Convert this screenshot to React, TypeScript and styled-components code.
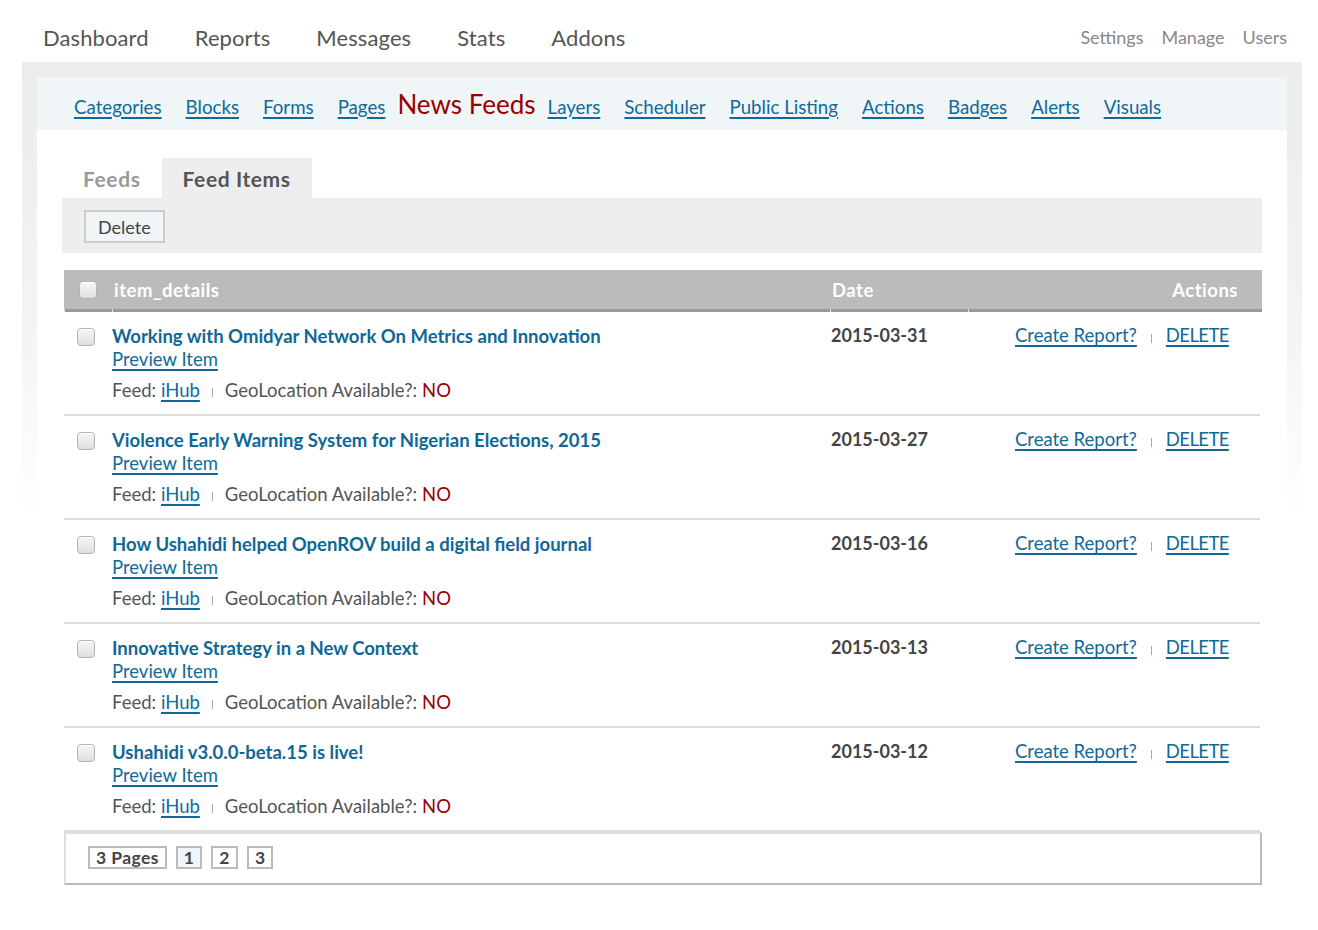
import React from "react";
import styled, { createGlobalStyle } from "styled-components";

const Global = createGlobalStyle`
  html, body { margin: 0; padding: 0; background: #fff; }
  body { font-family: Lato, "Open Sans", sans-serif; color: #555; }
  * { box-sizing: border-box; }
`;

const TopBar = styled.header`
  height: 62px;
  display: flex;
  align-items: center;
  justify-content: space-between;
  padding: 12px 31px 0 43px;
`;

const MainNav = styled.nav`
  display: flex;
`;

const MainLink = styled.a`
  font-size: 22px;
  letter-spacing: 0.1px;
  color: #555;
  text-decoration: none;
  margin-right: 46px;
`;

const UtilNav = styled.nav`
  display: flex;
  gap: 18px;
`;

const UtilLink = styled.a`
  font-size: 18px;
  color: #888;
  text-decoration: none;
`;

const Frame = styled.div`
  margin: 0 16px 0 22px;
  padding: 15px;
  background: linear-gradient(#ececec 0, #f3f3f3 250px, #fff 460px);
`;

const Panel = styled.div`
  background: #fff;
  padding-bottom: 46px;
`;

const SubNav = styled.nav`
  height: 53px;
  background: #f0f5f8;
  display: flex;
  align-items: center;
  padding: 6px 0 0 25px;
`;

const SubLink = styled.a<{ $active?: boolean }>`
  font-size: ${(p) => (p.$active ? "26px" : "18.7px")};
  color: ${(p) => (p.$active ? "#990000" : "#0f6a99")};
  text-decoration: ${(p) => (p.$active ? "none" : "underline")};
  text-underline-offset: 3px;
  text-decoration-thickness: 2px;
  margin: 0 ${(p) => (p.$active ? "0" : "12px")};
  position: relative;
  top: ${(p) => (p.$active ? "-3px" : "0")};
`;

const Content = styled.div`
  padding: 28px 25px 0 25px;
`;

const Tabs = styled.div`
  display: flex;
`;

const Tab = styled.a<{ $active?: boolean }>`
  height: 40px;
  display: flex;
  align-items: center;
  padding: 0 21px;
  font-size: 21px;
  letter-spacing: 0.6px;
  font-weight: bold;
  color: ${(p) => (p.$active ? "#555" : "#999")};
  background: ${(p) => (p.$active ? "#eee" : "transparent")};
  text-decoration: none;
`;

const Toolbar = styled.div`
  background: #eee;
  padding: 12px 22px 10px;
`;

const Button = styled.button`
  font-family: inherit;
  font-size: 18px;
  color: #444;
  background: #f0f5f8;
  border: 2px solid #ccc;
  height: 33px;
  padding: 0 12px;
`;

const Table = styled.div`
  margin: 17px 0 0 2px;
`;

const cols = "48px 718px 138px 1fr";

const HeadRow = styled.div`
  display: grid;
  grid-template-columns: ${cols};
  height: 42px;
`;

const HeadCell = styled.div<{ $align?: string; $pad?: string }>`
  display: flex;
  align-items: center;
  justify-content: ${(p) => p.$align || "flex-start"};
  padding: ${(p) => p.$pad || "0 0 3px 2px"};
  font-size: 18.5px;
  letter-spacing: 0.5px;
  font-weight: bold;
  color: #fff;
  background: linear-gradient(to right, #e6e6e6 0 1px, #999 1px) bottom / 100% 3px no-repeat, #bbb;
`;

const Check = styled.input.attrs({ type: "checkbox" })`
  appearance: none;
  width: 18px;
  height: 18px;
  margin: 0;
  border: 1px solid #b4b4b4;
  border-radius: 4px;
  background: linear-gradient(#f7f7f7, #dedede);
  box-shadow: inset 0 1px 0 #fff;
`;

const Row = styled.div`
  display: grid;
  grid-template-columns: ${cols};
  height: 104px;
  border-bottom: 2px solid #ddd;
  margin-right: 2px;
  &:last-child { border-bottom: none; height: 102px; }
`;

const CheckCell = styled.div`
  padding: 16px 0 0 13px;
`;

const Details = styled.div`
  padding: 13px 0 0 0;
  display: flex;
  flex-direction: column;
`;

const Title = styled.a`
  font-size: 18.5px;
  font-weight: bold;
  color: #0f6796;
  text-decoration: none;
  line-height: 23px;
`;

const Link = styled.a<{ $tight?: boolean }>`
  font-size: 18.5px;
  letter-spacing: ${(p) => (p.$tight ? "-0.6px" : "0")};
  color: #0f6a99;
  text-decoration: underline;
  text-underline-offset: 3px;
  text-decoration-thickness: 2px;
  line-height: 23px;
`;

const Meta = styled.div`
  margin-top: 8px;
  font-size: 18.5px;
  line-height: 23px;
  color: #555;
  display: flex;
  align-items: center;
`;

const Sep = styled.span`
  display: inline-block;
  width: 1px;
  height: 9px;
  background: #aaa;
  margin: 3px 12px 0;
`;

const No = styled.span`
  color: #990000;
  margin-left: 5px;
`;

const DateCell = styled.div`
  padding: 12px 0 0 1px;
  font-size: 18px;
  font-weight: bold;
  color: #444;
  line-height: 23px;
`;

const ActionsCell = styled.div`
  padding: 12px 0 0 47px;
  display: flex;
  align-items: flex-start;
  line-height: 23px;
`;

const ActionSep = styled(Sep)`
  margin: 10px 14px 0;
`;

const Pager = styled.div`
  height: 53px;
  border: 2px solid #bbb;
  border-top-color: #ddd;
  border-left-color: #ddd;
  display: flex;
  align-items: center;
  gap: 9px;
  padding: 0 0 2px 22px;
`;

const PageBox = styled.span<{ $current?: boolean }>`
  height: 23px;
  display: flex;
  align-items: center;
  padding: 0 6px;
  border: 2px solid #bbb;
  font-size: 17.5px;
  letter-spacing: 0.4px;
  font-weight: bold;
  color: #444;
  background: ${(p) => (p.$current ? "#f0f5f8" : "#fff")};
`;

const items = [
  ["Working with Omidyar Network On Metrics and Innovation", "2015-03-31"],
  ["Violence Early Warning System for Nigerian Elections, 2015", "2015-03-27"],
  ["How Ushahidi helped OpenROV build a digital field journal", "2015-03-16"],
  ["Innovative Strategy in a New Context", "2015-03-13"],
  ["Ushahidi v3.0.0-beta.15 is live!", "2015-03-12"],
];

const subLinks = ["Categories", "Blocks", "Forms", "Pages", "News Feeds", "Layers", "Scheduler", "Public Listing", "Actions", "Badges", "Alerts", "Visuals"];

export default function App() {
  return (
    <>
      <Global />
      <TopBar>
        <MainNav>
          {["Dashboard", "Reports", "Messages", "Stats", "Addons"].map((n) => (
            <MainLink key={n} href="#">{n}</MainLink>
          ))}
        </MainNav>
        <UtilNav>
          {["Settings", "Manage", "Users"].map((n) => (
            <UtilLink key={n} href="#">{n}</UtilLink>
          ))}
        </UtilNav>
      </TopBar>
      <Frame>
        <Panel>
          <SubNav>
            {subLinks.map((n) => (
              <SubLink key={n} href="#" $active={n === "News Feeds"}>{n}</SubLink>
            ))}
          </SubNav>
          <Content>
            <Tabs>
              <Tab href="#">Feeds</Tab>
              <Tab href="#" $active>Feed Items</Tab>
            </Tabs>
            <Toolbar>
              <Button>Delete</Button>
            </Toolbar>
            <Table>
              <HeadRow>
                <HeadCell $pad="0 0 3px 15px"><Check /></HeadCell>
                <HeadCell>item_details</HeadCell>
                <HeadCell>Date</HeadCell>
                <HeadCell $align="flex-end" $pad="0 24px 3px 0">Actions</HeadCell>
              </HeadRow>
              {items.map(([t, d]) => (
                <Row key={t}>
                  <CheckCell><Check /></CheckCell>
                  <Details>
                    <Title href="#">{t}</Title>
                    <div><Link href="#">Preview Item</Link></div>
                    <Meta>
                      Feed:&nbsp;<Link href="#">iHub</Link>
                      <Sep />
                      GeoLocation Available?: <No>NO</No>
                    </Meta>
                  </Details>
                  <DateCell>{d}</DateCell>
                  <ActionsCell>
                    <Link href="#">Create Report?</Link>
                    <ActionSep />
                    <Link href="#" $tight>DELETE</Link>
                  </ActionsCell>
                </Row>
              ))}
              <Pager>
                <PageBox>3 Pages</PageBox>
                <PageBox $current>1</PageBox>
                <PageBox>2</PageBox>
                <PageBox>3</PageBox>
              </Pager>
            </Table>
          </Content>
        </Panel>
      </Frame>
    </>
  );
}
